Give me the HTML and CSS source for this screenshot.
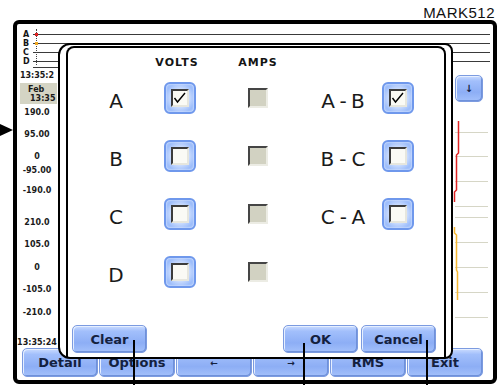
FILE: index.html
```html
<!doctype html>
<html>
<head>
	<meta charset="UTF-8">
	<title>Channel select</title>
	<link rel="stylesheet" href="styles.css">
</head>
<body>
	<div class="brand">MARK512</div>
	<div class="device">
		<div class="screen">
			<div class="traces">
				<div class="trace"><span class="ch">A</span><span class="line"></span></div>
				<div class="trace"><span class="ch">B</span><span class="line"></span></div>
				<div class="trace"><span class="ch">C</span><span class="line"></span></div>
				<div class="trace"><span class="ch">D</span><span class="line"></span></div>
				<div class="base"></div>
				<span class="cursor"></span>
				<span class="dot red"></span>
				<span class="dot orange"></span>
			</div>
			<div class="main">
				<div class="axis">
					<div class="tick">13:35:2</div>
					<div class="stamp"><span>Feb</span><span class="time">13:35</span></div>
					<div class="tick">190.0</div>
					<div class="tick">95.00</div>
					<div class="tick">0</div>
					<div class="tick">-95.00</div>
					<div class="tick">-190.0</div>
					<div class="tick">210.0</div>
					<div class="tick">105.0</div>
					<div class="tick">0</div>
					<div class="tick">-105.0</div>
					<div class="tick">-210.0</div>
					<div class="tick">13:35:24</div>
				</div>
				<div class="plot">
					<svg viewBox="0 0 436 278" width="436" height="278">
						<g stroke="#D6D6C6" stroke-width="1">
							<line x1="398" y1="62.5" x2="431" y2="62.5"/>
							<line x1="398" y1="86.5" x2="431" y2="86.5"/>
							<line x1="398" y1="111.5" x2="431" y2="111.5"/>
							<line x1="398" y1="136.5" x2="431" y2="136.5"/>
							<line x1="398" y1="147.5" x2="431" y2="147.5"/>
							<line x1="398" y1="172.5" x2="431" y2="172.5"/>
							<line x1="398" y1="197.5" x2="431" y2="197.5"/>
							<line x1="398" y1="222.5" x2="431" y2="222.5"/>
							<line x1="398" y1="247.5" x2="431" y2="247.5"/>
						</g>
						<polyline points="401.5,51 401.5,83 399.5,85 399.5,120 397.5,122 397.5,132" fill="none" stroke="#E02424" stroke-width="1.5"/>
						<polyline points="397.5,157 397.5,163 399.5,165 399.5,200 400.5,202 400.5,230" fill="none" stroke="#F6B833" stroke-width="1.5"/>
					</svg>
					<div class="btn scroll">&#8595;</div>
				</div>
			</div>
			<div class="softkeys">
				<div class="btn key">Detail</div>
				<div class="btn key">Options</div>
				<div class="btn key small">&#8592;</div>
				<div class="btn key small">&#8594;</div>
				<div class="btn key">RMS</div>
				<div class="btn key">Exit</div>
			</div>
		</div>
	</div>

	<div class="dialog">
		<div class="panel">
			<div class="grid">
				<span></span>
				<span class="head volts">VOLTS</span>
				<span class="head">AMPS</span>
				<span></span>
				<span></span>

				<span class="label">A</span>
				<span class="vbox"><span class="well"><svg viewBox="0 0 14 14" width="14" height="14"><polyline points="1.5,7 4.5,11 12,2" fill="none" stroke="#000" stroke-width="1.4"/></svg></span></span>
				<span class="abox"></span>
				<span class="label pair">A-B</span>
				<span class="vbox"><span class="well"><svg viewBox="0 0 14 14" width="14" height="14"><polyline points="1.5,7 4.5,11 12,2" fill="none" stroke="#000" stroke-width="1.4"/></svg></span></span>

				<span class="label">B</span>
				<span class="vbox"><span class="well"></span></span>
				<span class="abox"></span>
				<span class="label pair">B-C</span>
				<span class="vbox"><span class="well"></span></span>

				<span class="label">C</span>
				<span class="vbox"><span class="well"></span></span>
				<span class="abox"></span>
				<span class="label pair">C-A</span>
				<span class="vbox"><span class="well"></span></span>

				<span class="label">D</span>
				<span class="vbox"><span class="well"></span></span>
				<span class="abox"></span>
				<span></span>
				<span></span>
			</div>
			<div class="actions">
				<div class="btn action">Clear</div>
				<div class="btn action ok">OK</div>
				<div class="btn action">Cancel</div>
			</div>
		</div>
	</div>

	<span class="pointer"></span>
	<span class="callout c-clear"></span>
	<span class="callout c-ok"></span>
	<span class="callout c-cancel"></span>
</body>
</html>
```

FILE: styles.css
```css
*{
	margin:0;
	box-sizing:border-box;
}
body{
	position:relative;
	width:500px;
	height:385px;
	overflow:hidden;
	background:#FFFFFF;
	color:#141414;
	font-family:"DejaVu Sans", sans-serif;
}
.brand{
	height:20px;
	padding-right:5px;
	text-align:right;
	font:15px/26px "Liberation Sans", Arial, sans-serif;
	letter-spacing:0.5px;
	color:#111111;
}
.device{
	width:484px;
	height:364px;
	margin-left:13px;
	border:4px solid #000000;
	border-radius:6px;
	background:#FFFFFF;
}
.screen{
	height:100%;
	display:flex;
	flex-direction:column;
}

/* trace header */
.traces{
	position:relative;
	height:46px;
	padding-top:6px;
	font-size:8px;
	font-weight:bold;
}
.trace{
	display:flex;
	align-items:center;
	height:9px;
}
.ch{
	width:16px;
	padding-left:6px;
	line-height:9px;
}
.line{
	flex:1;
	height:1px;
	margin-right:3px;
	background:#3A3A3A;
}
.base{
	width:29px;
	margin:1px 0 0 16px;
	border-top:1px solid #3A3A3A;
}
.cursor{
	position:absolute;
	left:19px;
	top:5px;
	height:36px;
	border-left:1px dotted #444444;
}
.dot{
	position:absolute;
	left:18px;
	width:3px;
	height:3px;
}
.dot.red{
	top:9px;
	background:#E02424;
}
.dot.orange{
	top:18px;
	background:#F0A820;
}

/* plot area */
.main{
	flex:1;
	display:flex;
	min-height:0;
}
.axis{
	width:44px;
	padding-top:1px;
	display:grid;
	grid-template-rows:12px 25px 21.5px 22px 14px 20px 32px 22px 23px 22px 23px 30px 10px;
	font-size:8px;
	font-weight:bold;
	line-height:10px;
	text-align:center;
	white-space:nowrap;
	color:#1A1A1A;
}
.stamp{
	width:37px;
	height:21px;
	margin-left:3px;
	padding:2px 0 0 8px;
	display:flex;
	flex-direction:column;
	text-align:left;
	line-height:9px;
	background:#D4D4C4;
}
.stamp .time{
	padding-left:2px;
}
.plot{
	position:relative;
	flex:1;
}
.plot svg{
	display:block;
}

/* blue buttons */
.btn{
	display:flex;
	align-items:center;
	justify-content:center;
	border:1px solid #7C9BE0;
	border-radius:5px;
	background:linear-gradient(to bottom, #CBDCFF 0%, #A2BFFB 20%, #8DAEF5 65%, #A3C0FB 100%);
	box-shadow:inset 1px 1px 0 #E6EFFF, inset -1px -1px 0 #6F91DA;
	color:#14213F;
	font-size:13px;
	font-weight:bold;
}
.scroll{
	position:absolute;
	left:398px;
	top:5px;
	width:28px;
	height:27px;
	font-size:10px;
}
.softkeys{
	display:flex;
	gap:1px;
	height:32px;
	padding:0 9px 3px 5px;
}
.key{
	width:76px;
	height:29px;
}
.key.small{
	font-size:9px;
}

/* channel dialog */
.dialog{
	position:absolute;
	left:58px;
	top:43px;
	width:395px;
	height:316px;
	padding:1px 5px 0 6px;
	border:2px solid #000000;
	border-radius:12px 8px 8px 12px;
	background:#FFFFFF;
}
.panel{
	height:100%;
	display:flex;
	flex-direction:column;
	border:2px solid #000000;
	border-bottom:0;
	border-radius:8px 8px 0 0;
}
.grid{
	display:grid;
	grid-template-columns:64px 64px 92px 78px 31px;
	grid-template-rows:13px repeat(4, 58px);
	align-items:center;
	justify-items:center;
	padding:8px 0 0 16px;
}
.head{
	font-size:11px;
	font-weight:bold;
	letter-spacing:1px;
	line-height:13px;
}
.head.volts{
	margin-right:6px;
}
.label{
	padding-top:6px;
	font-size:20px;
	line-height:24px;
	color:#1A1A1A;
}
.label.pair{
	letter-spacing:5px;
	margin-right:-5px;
}
.vbox{
	width:32px;
	height:32px;
	display:flex;
	align-items:center;
	justify-content:center;
	border:2px solid #6F98EC;
	border-radius:6px;
	background:radial-gradient(circle, #DCE8FF 35%, #9EBEFB 75%);
	box-shadow:inset 0 0 2px #FFFFFF;
}
.well{
	width:18px;
	height:18px;
	display:flex;
	align-items:center;
	justify-content:center;
	border:2px solid;
	border-color:#3C3C3C #E6E6DE #E6E6DE #3C3C3C;
	background:#FAFAF5;
}
.abox{
	width:20px;
	height:20px;
	border:2px solid;
	border-color:#454545 #ECECE4 #ECECE4 #454545;
	background:#D2D2C2;
}
.actions{
	display:flex;
	margin-top:auto;
	padding:0 8px 4px 4px;
}
.action{
	width:75px;
	height:28px;
}
.action.ok{
	margin-left:auto;
	margin-right:3px;
}

/* annotation marks */
.pointer{
	position:absolute;
	left:0;
	top:124px;
	width:0;
	height:0;
	border-left:13px solid #000000;
	border-top:6px solid transparent;
	border-bottom:6px solid transparent;
}
.callout{
	position:absolute;
	bottom:0;
	width:2px;
	background:#000000;
}
.c-clear{
	left:133px;
	top:340px;
}
.c-ok{
	left:303px;
	top:343px;
}
.c-cancel{
	left:426px;
	top:340px;
}
```
